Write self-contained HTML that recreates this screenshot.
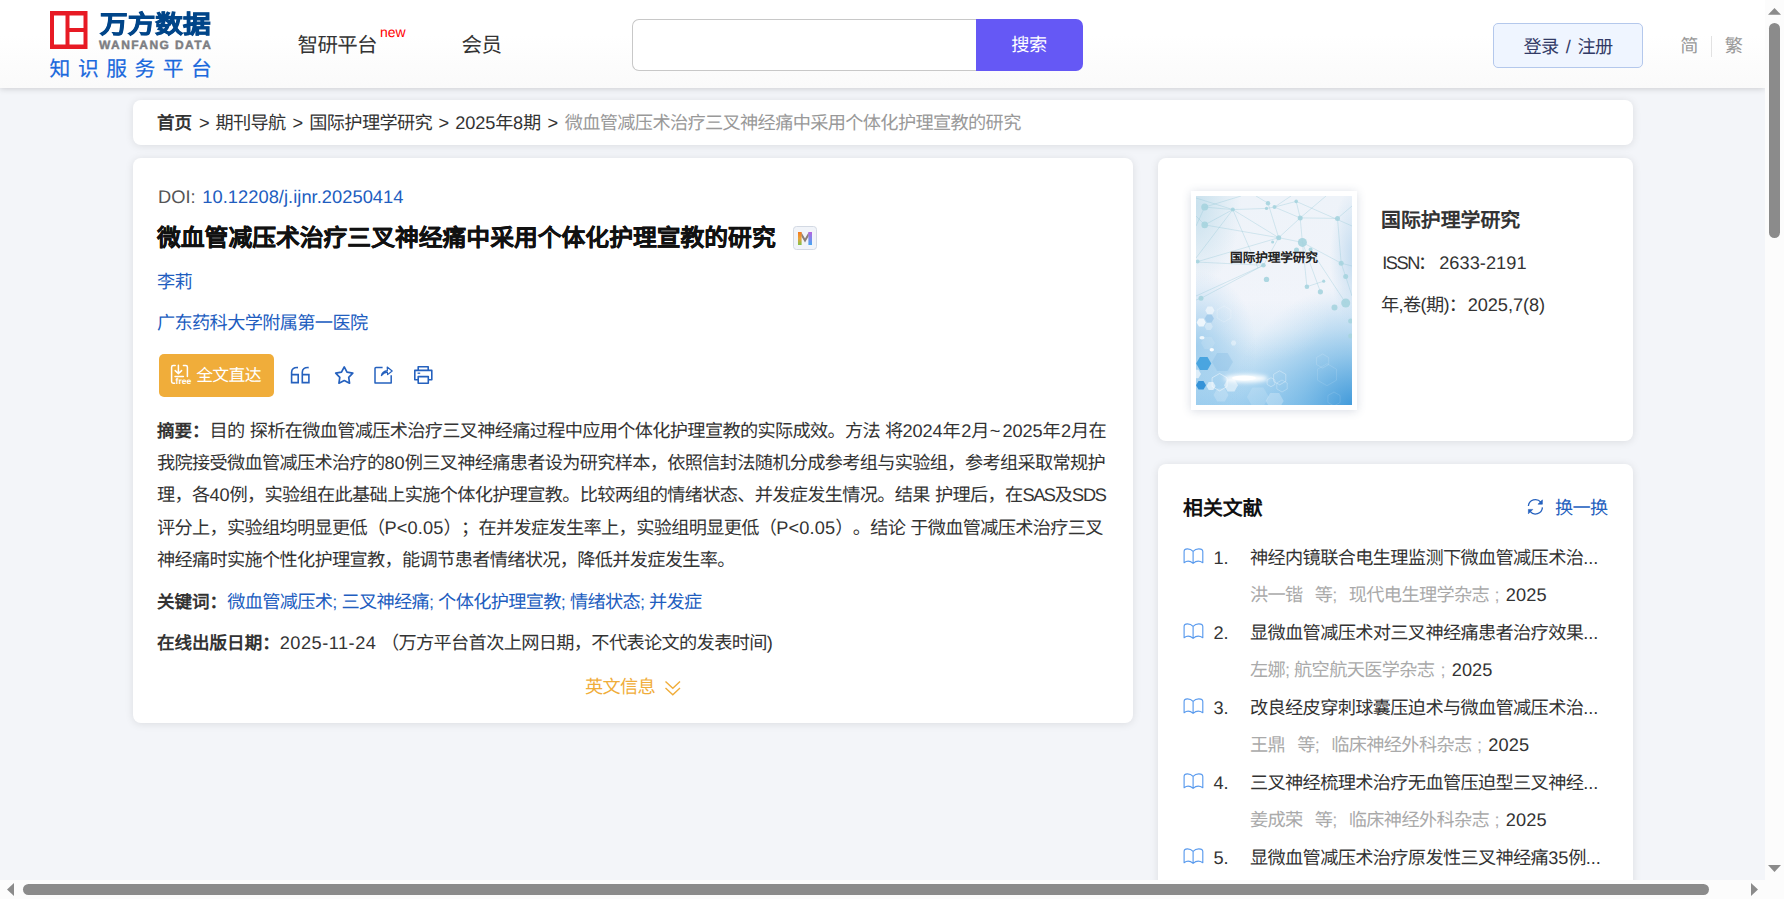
<!DOCTYPE html>
<html lang="zh-CN">
<head>
<meta charset="utf-8">
<title>微血管减压术治疗三叉神经痛中采用个体化护理宣教的研究 - 万方数据知识服务平台</title>
<style>
*{box-sizing:border-box;margin:0;padding:0}
html,body{width:1784px;height:899px;overflow:hidden}
body{text-rendering:geometricPrecision;text-spacing-trim:space-all;font-family:"Liberation Sans",sans-serif;background:#f3f5f9;color:#333;position:relative;font-size:18.2px;letter-spacing:-.65px}
a{text-decoration:none;color:inherit}
.abs{position:absolute;white-space:nowrap}
/* header */
#hdr{position:absolute;left:0;top:0;width:1765px;height:88px;background:linear-gradient(#fff,#fff 40%,#fafafa);box-shadow:0 1px 6px rgba(0,0,0,.16)}
/* cards */
.card{position:absolute;background:#fff;border-radius:8px;box-shadow:0 1px 8px rgba(0,0,0,.1)}
.blue{color:#215dbf}
.d{font-size:18.2px;letter-spacing:-.1px;line-height:1}
.L{font-size:18.2px;line-height:1;letter-spacing:0}
.gt{line-height:26px}
b{font-size:17.55px;letter-spacing:0}
.gray{color:#aaa}
/* scrollbars */
.sb{position:absolute;background:#fcfcfc}
.thumb{position:absolute;background:#8b8b8b;border-radius:6px}
</style>
</head>
<body>

<!-- ===== header ===== -->
<div id="hdr">
  <!-- logo -->
  <svg class="abs" style="left:50px;top:11px" width="38" height="38" viewBox="0 0 38 38">
    <rect x="0" y="0" width="37.5" height="38" fill="#e71a24"/>
    <rect x="4" y="4.5" width="11.5" height="29" fill="#fff"/>
    <rect x="19.5" y="4.5" width="14" height="12.5" fill="#fff"/>
    <rect x="19.5" y="21" width="14" height="12.5" fill="#fff"/>
  </svg>
  <div class="abs" id="lg1" style="left:99.5px;top:7.6px;font-size:25px;font-weight:900;color:#004589;-webkit-text-stroke:.8px #004589;line-height:34px;letter-spacing:0;transform:scaleX(1.105);transform-origin:0 0">万方数据</div>
  <div class="abs" id="lg2" style="left:99px;top:38px;font-size:12px;font-weight:bold;color:#7d7e83;-webkit-text-stroke:.45px #7d7e83;line-height:14px;letter-spacing:1.42px">WANFANG DATA</div>
  <div class="abs" id="lg3" style="left:49.6px;top:57.3px;font-size:20.8px;color:#1a69dd;-webkit-text-stroke:.2px #1a69dd;line-height:26px;letter-spacing:7.5px">知识服务平台</div>

  <div class="abs" id="nav1" style="left:297.6px;top:32.7px;font-size:20.5px;letter-spacing:-.7px;line-height:26px;color:#333">智研平台</div>
  <div class="abs" id="new" style="letter-spacing:0;left:380px;top:23.5px;font-size:14px;line-height:16px;color:#f00">new</div>
  <div class="abs" id="nav2" style="left:461.6px;top:32.7px;font-size:20.5px;letter-spacing:-.7px;line-height:26px;color:#333">会员</div>

  <!-- search -->
  <div class="abs" style="left:632px;top:19px;width:345px;height:52px;border:1px solid #c8c8c8;border-right:0;border-radius:7px 0 0 7px;background:#fff"></div>
  <div class="abs" id="sbtn" style="left:976px;top:19px;width:107px;height:52px;border-radius:0 7px 7px 0;background:#6558f5;color:#fff;font-size:18.2px;line-height:53.6px;text-align:center;text-indent:-1.2px">搜索</div>

  <!-- login -->
  <div class="abs" id="login" style="left:1493px;top:23px;width:150px;height:45px;border:1px solid #b4c8ec;border-radius:5px;background:#eff5ff;color:#323a66;font-size:18.2px;line-height:46px;word-spacing:2.9px;text-align:center">登录 / 注册</div>
  <div class="abs" id="jian" style="left:1680.2px;top:34px;font-size:18.2px;line-height:24px;color:#999">简</div>
  <div class="abs" style="left:1711px;top:36px;width:1px;height:21px;background:#e2e2e2"></div>
  <div class="abs" id="fan" style="left:1724.7px;top:34px;font-size:18.2px;line-height:24px;color:#999">繁</div>
</div>

<!-- ===== breadcrumb ===== -->
<div class="card" style="left:133px;top:100px;width:1500px;height:45px"></div>
<div id="bc" style="position:absolute;left:0;top:109.6px;width:1200px;height:26px;line-height:26px;color:#333;white-space:nowrap">
<b class="abs" style="left:157px">首页</b><span class="abs L gt" style="left:199px">&gt;</span>
<a class="abs" style="left:215.5px">期刊导航</a><span class="abs L gt" style="left:292.4px">&gt;</span>
<a class="abs" style="left:309.3px">国际护理学研究</a><span class="abs L gt" style="left:438.4px">&gt;</span>
<a class="abs" id="bc4" style="left:455.3px"><span class="d">2025</span>年<span class="d">8</span>期</a><span class="abs L gt" style="left:547.6px">&gt;</span>
<span class="abs" id="bc5" style="left:564.7px;color:#999">微血管减压术治疗三叉神经痛中采用个体化护理宣教的研究</span>
</div>

<!-- ===== main card ===== -->
<div class="card" style="left:133px;top:158px;width:1000px;height:565px"></div>
<div class="abs" id="doi" style="letter-spacing:0;left:158px;top:184.2px;line-height:26px;font-size:18.3px;color:#555">DOI: <a class="blue" id="doilink" style="margin-left:1.6px;letter-spacing:.04px">10.12208/j.ijnr.20250414</a></div>
<h1 class="abs" id="ttl" style="letter-spacing:0;left:157px;top:223.3px;-webkit-text-stroke:.3px #111;font-size:23.8px;line-height:32px;font-weight:bold;color:#111">微血管减压术治疗三叉神经痛中采用个体化护理宣教的研究</h1>
<svg class="abs" id="mico" style="left:793px;top:226px" width="24" height="24" viewBox="0 0 24 24">
  <defs>
    <linearGradient id="mg1" x1="0" y1="0" x2="0" y2="1"><stop offset="0" stop-color="#f47a1f"/><stop offset=".5" stop-color="#e9a23a"/><stop offset="1" stop-color="#7fc24a"/></linearGradient>
    <linearGradient id="mg2" x1="0" y1="0" x2="0" y2="1"><stop offset="0" stop-color="#b565e0"/><stop offset=".5" stop-color="#7f86ea"/><stop offset="1" stop-color="#45a6f2"/></linearGradient>
  </defs>
  <rect x=".5" y=".5" width="23" height="23" rx="3" fill="#f1f4f9" stroke="#d3d9e3"/>
  <path d="M8.2 6 L12 12.6 L15.8 6 L15.8 10 L12 16.5 L8.2 10Z" fill="#8a7f78"/>
  <rect x="5" y="6" width="3.6" height="13" fill="url(#mg1)"/>
  <rect x="15.4" y="6" width="3.6" height="13" fill="url(#mg2)"/>
</svg>
<a class="abs blue" id="auth" style="left:157px;top:269px;line-height:26px">李莉</a>
<a class="abs blue" id="aff" style="left:157px;top:310px;line-height:26px">广东药科大学附属第一医院</a>

<div class="abs" id="ftbtn" style="left:159px;top:354px;width:115px;height:43px;border-radius:5px;background:#f0ad3a"></div>
<svg class="abs" id="ftico" style="left:170px;top:364px" width="24" height="22" viewBox="0 0 24 22" fill="none" stroke="#fff" stroke-width="1.5" stroke-linecap="round" stroke-linejoin="round">
  <path d="M5.2 1.6 H3.2 Q1.6 1.6 1.6 3.2 V17.6 Q1.6 19.2 3.2 19.2 H4.6"/>
  <path d="M13.4 1.6 H15.8 Q17.4 1.6 17.4 3.2 V12.6"/>
  <path d="M8.4 1.2 V9.4 M5.2 6.6 L8.4 9.6 L11.6 6.6"/>
  <path d="M5 12.6 H13.4"/>
  <text x="5.6" y="20.4" font-family="Liberation Sans, sans-serif" font-size="8.6" font-weight="bold" letter-spacing="0" fill="#fff" stroke="none">free</text>
</svg>
<svg class="abs" id="icq" style="left:290px;top:366px" width="21" height="19" viewBox="0 0 21 19" fill="none" stroke="#2561be" stroke-width="1.6">
  <path d="M8 1.6 Q1.6 1.2 1.6 6.2 V16.6 H8.2 V8.6 H1.6"/>
  <path d="M18.7 1.6 Q12.3 1.2 12.3 6.2 V16.6 H18.9 V8.6 H12.3"/>
</svg>
<svg class="abs" id="ics" style="left:334px;top:365px" width="21" height="20" viewBox="0 0 21 20" fill="none" stroke="#2561be" stroke-width="1.7" stroke-linejoin="round">
  <path d="M10.25 1.90 L13.01 7.10 L18.81 8.12 L14.72 12.35 L15.54 18.18 L10.25 15.60 L4.96 18.18 L5.78 12.35 L1.69 8.12 L7.49 7.10Z"/>
</svg>
<svg class="abs" id="icsh" style="left:373px;top:365px" width="21" height="20" viewBox="0 0 21 20" fill="none" stroke="#2561be" stroke-width="1.5" stroke-linejoin="round">
  <path d="M9.6 2.6 H3 Q2 2.6 2 3.6 V18 H18.2 V10.2"/>
  <path d="M8.4 10.6 Q9.2 6.2 14.4 5.6 L14.2 2 L19.2 6 L14.6 9.6 L14.4 7.2 Q10.6 7.4 8.4 10.6Z" stroke-width="1.2"/>
</svg>
<svg class="abs" id="icp" style="left:413px;top:365px" width="21" height="20" viewBox="0 0 21 20" fill="none" stroke="#2561be" stroke-width="1.6" stroke-linejoin="round">
  <path d="M5.2 5.4 V1.8 H15.2 V5.4"/>
  <path d="M5.2 14.8 H1.8 V5.4 H18.8 V14.8 H15.4"/>
  <path d="M5.2 11.6 H15.3 V18.2 H5.2Z"/>
  <path d="M4.6 8.2 H7.2" stroke-width="1.3"/>
</svg>
<div class="abs" id="fttxt" style="left:196.2px;top:364px;font-size:16.8px;letter-spacing:-.6px;line-height:24px;color:#fff">全文直达</div>

<div id="abs" style="position:absolute;left:157px;top:414.5px;width:960px;line-height:32.45px;color:#333;white-space:nowrap;word-spacing:.7px;letter-spacing:-.68px">
<div id="l1"><b>摘要：</b>目的 探析在微血管减压术治疗三叉神经痛过程中应用个体化护理宣教的实际成效。方法 将<span class="d">2024</span>年<span class="d" style="margin-left:1.1px">2</span>月<span style="margin:0 2px 0 1px;letter-spacing:0">~</span><span class="d">2025</span>年<span class="d" style="margin-left:1.1px">2</span>月在</div>
<div id="l2">我院接受微血管减压术治疗的<span class="d">80</span>例三叉神经痛患者设为研究样本，依照信封法随机分成参考组与实验组，参考组采取常规护</div>
<div id="l3">理，各<span class="d">40</span>例，实验组在此基础上实施个体化护理宣教。比较两组的情绪状态、并发症发生情况。结果 护理后，在<span style="letter-spacing:-1.45px">SAS</span>及<span style="letter-spacing:-1.25px">SDS</span></div>
<div id="l4">评分上，实验组均明显更低（<span style="letter-spacing:.13px">P&lt;0.05</span>）；在并发症发生率上，实验组明显更低（<span style="letter-spacing:.13px">P&lt;0.05</span>）。结论 于微血管减压术治疗三叉</div>
<div id="l5">神经痛时实施个性化护理宣教，能调节患者情绪状况，降低并发症发生率。</div>
</div>

<div class="abs" id="kw" style="left:157px;top:589.4px;line-height:26px;word-spacing:.2px"><b>关键词：</b><span class="blue"><a>微血管减压术</a>; <a>三叉神经痛</a>; <a>个体化护理宣教</a>; <a>情绪状态</a>; <a>并发症</a></span></div>
<div class="abs" id="dt" style="left:157px;top:630px;line-height:26px"><b>在线出版日期：</b><span class="L" style="letter-spacing:.5px">2025-11-24</span><span style="margin-left:4.5px">（</span>万方平台首次上网日期，不代表论文的发表时间)</div>
<div class="abs" id="en" style="left:585px;top:674px;line-height:26px;color:#f0ad3a">英文信息</div>
<svg class="abs" id="chev" style="left:664px;top:680px" width="18" height="17" viewBox="0 0 18 17" fill="none" stroke="#f0ad3a" stroke-width="1.4"><path d="M1.5 1.5 L8.8 8.3 L16 1.5"/><path d="M1.5 8 L8.8 14.8 L16 8"/></svg>

<!-- ===== journal card ===== -->
<div class="card" style="left:1158px;top:158px;width:475px;height:283px"></div>
<div class="abs" id="cov" style="left:1191px;top:191px;width:166px;height:219px;background:#fff;box-shadow:0 1px 9px rgba(60,80,120,.2)">
<svg id="covimg" style="position:absolute;left:5px;top:5px" width="156" height="209" viewBox="0 0 156 209">
<defs>
<linearGradient id="cg0" x1="0" y1="0" x2="0" y2="1"><stop offset="0" stop-color="#eef3f9"/><stop offset=".5" stop-color="#f1f4fa"/><stop offset=".64" stop-color="#e3eef8"/><stop offset=".8" stop-color="#c6e1f4"/><stop offset="1" stop-color="#9fcfef"/></linearGradient>
<radialGradient id="cg1" cx="160" cy="214" r="125" gradientUnits="userSpaceOnUse"><stop offset="0" stop-color="#3a95d8" stop-opacity="1"/><stop offset=".45" stop-color="#5aaae0" stop-opacity=".5"/><stop offset="1" stop-color="#7fc0ea" stop-opacity="0"/></radialGradient>
<radialGradient id="cg2" cx="0" cy="0" r="1" gradientTransform="translate(0 150) scale(60 75)" gradientUnits="userSpaceOnUse"><stop offset="0" stop-color="#8cc4ea" stop-opacity=".7"/><stop offset="1" stop-color="#8cc4ea" stop-opacity="0"/></radialGradient>
<radialGradient id="cg3" cx="0" cy="0" r="1" gradientTransform="translate(0 10) scale(45 80)" gradientUnits="userSpaceOnUse"><stop offset="0" stop-color="#c4dfec" stop-opacity=".9"/><stop offset="1" stop-color="#c4dfec" stop-opacity="0"/></radialGradient>
<radialGradient id="cg4" cx="0" cy="0" r="1" gradientTransform="translate(158 62) scale(24 70)" gradientUnits="userSpaceOnUse"><stop offset="0" stop-color="#c0daef" stop-opacity=".95"/><stop offset="1" stop-color="#c3dcf0" stop-opacity="0"/></radialGradient>
<radialGradient id="cg5" cx="0" cy="0" r="1" gradientTransform="translate(74 120) scale(60 45)" gradientUnits="userSpaceOnUse"><stop offset="0" stop-color="#f2f5fb" stop-opacity=".35"/><stop offset="1" stop-color="#f2f5fb" stop-opacity="0"/></radialGradient>
<filter id="bl" x="-50%" y="-200%" width="200%" height="500%"><feGaussianBlur stdDeviation="2.2"/></filter>
<filter id="bl2" x="-20%" y="-20%" width="140%" height="140%"><feGaussianBlur stdDeviation=".5"/></filter>
</defs>
<rect width="156" height="209" fill="url(#cg0)"/><rect width="156" height="209" fill="url(#cg2)"/><rect width="156" height="209" fill="url(#cg1)"/><rect width="156" height="209" fill="url(#cg5)"/><rect width="156" height="209" fill="url(#cg3)"/><rect width="156" height="209" fill="url(#cg4)"/>
<g filter="url(#bl2)"><g fill="none" stroke="#8fc6d6" stroke-opacity=".42" stroke-width=".8"><path d="M8.7 11.1 L36.8 13.6 L70.5 12.4 L78.5 11.1 L100.2 5.4 L156 30"/><path d="M0 2 L36.8 13.6 L82.7 41.7 L106.4 46.4 L145.2 67.2 L156 70"/><path d="M0 20 L8.7 28.9 L36.8 13.6 L0 62"/><path d="M8.7 28.9 L82.7 41.7"/><path d="M36.8 13.6 L62 72"/><path d="M72 7.2 L82.7 41.7 L67.4 69.3 L5 102.3 L0 104"/><path d="M60 0 L72 7.2 M95 0 L78.5 11.1 L104.2 21.9 L141.5 22.4 L156 10"/><path d="M100.2 5.4 L104.2 21.9 L106.4 46.4 L110.9 90.7 L127.7 85.2"/><path d="M104.2 21.9 L82.7 41.7 L1.6 65.6"/><path d="M130 0 L104.2 21.9"/><path d="M141.5 22.4 L145.2 67.2 L149.7 80.5 L156 100"/><path d="M106.4 46.4 L124.4 95.8"/><path d="M0 66 L67.4 69.3 L0 100"/><path d="M114.6 53.6 L149.7 107"/><path d="M8.7 11.1 L0 30 M8.7 11.1 L45 0"/></g>
<g fill="#a6d4df" fill-opacity=".9"><circle cx="8.7" cy="11.1" r="3.5"/><circle cx="8.7" cy="28.9" r="3.3"/><circle cx="36.8" cy="13.6" r="2"/><circle cx="72" cy="7.2" r="2.2"/><circle cx="70.5" cy="12.4" r="1.6"/><circle cx="78.5" cy="11.1" r="2"/><circle cx="100.2" cy="5.4" r="1.8"/><circle cx="104.2" cy="21.9" r="2.5"/><circle cx="141.5" cy="22.4" r="2.5"/><circle cx="82.7" cy="41.7" r="2.5"/><circle cx="76.6" cy="46" r="1.5"/><circle cx="106.4" cy="46.4" r="4.5"/><circle cx="100.5" cy="54" r="2.5"/><circle cx="114.6" cy="53.6" r="2"/><circle cx="67.4" cy="69.3" r="2.3"/><circle cx="70.5" cy="83.4" r="2.7"/><circle cx="110.9" cy="90.7" r="2.3"/><circle cx="127.7" cy="85.2" r="1.6"/><circle cx="124.4" cy="95.8" r="2.6"/><circle cx="145.2" cy="67.2" r="2.5"/><circle cx="149.7" cy="80.5" r="2.5"/><circle cx="1.6" cy="65.6" r="2"/><circle cx="5" cy="102.3" r="2.5"/><circle cx="138.5" cy="111.5" r="3"/><circle cx="149.7" cy="107" r="4.5"/><circle cx="154.6" cy="125" r="2.5"/><circle cx="154.6" cy="140" r="2.5"/></g></g>
<polygon points="18.5,114.6 16.2,118.6 11.6,118.6 9.3,114.6 11.6,110.6 16.2,110.6" fill="#fff" fill-opacity="0.55"/>
<polygon points="17.9,122.4 15.6,126.4 11.0,126.4 8.7,122.4 11.0,118.4 15.6,118.4" fill="#9cc7e8" fill-opacity="0.8"/>
<polygon points="9.8,126.4 7.5,130.4 2.9,130.4 0.6,126.4 2.9,122.4 7.5,122.4" fill="#fff" fill-opacity="0.75"/>
<polygon points="16.9,130.5 14.8,134.1 10.6,134.1 8.5,130.5 10.6,126.9 14.8,126.9" fill="#fff" fill-opacity="0.3"/>
<polygon points="40.4,147.0 39.0,149.4 36.2,149.4 34.8,147.0 36.2,144.6 39.0,144.6" fill="#fff" fill-opacity="0.4"/>
<polygon points="15.3,167.5 11.5,174.1 3.9,174.1 0.1,167.5 3.9,160.9 11.5,160.9" fill="#3fa0de" fill-opacity="0.9"/>
<polygon points="36.9,166.0 31.6,175.1 21.2,175.1 15.9,166.0 21.1,156.9 31.6,156.9" fill="#7db6e2" fill-opacity="0.3"/>
<polygon points="10.0,189.3 7.5,193.6 2.5,193.6 0.0,189.3 2.5,185.0 7.5,185.0" fill="#2f8fd6" fill-opacity="0.95"/>
<polygon points="19.6,190.0 17.3,194.0 12.7,194.0 10.4,190.0 12.7,186.0 17.3,186.0" fill="#fff" fill-opacity="0.6"/>
<polygon points="42.0,189.3 38.5,195.4 31.5,195.4 28.0,189.3 31.5,183.2 38.5,183.2" fill="#fff" fill-opacity="0.5"/>
<polygon points="72.9,201.0 67.4,210.5 56.4,210.5 50.9,201.0 56.4,191.5 67.4,191.5" fill="#fff" fill-opacity="0.14"/>
<polygon points="87.7,204.9 83.2,212.7 74.2,212.7 69.7,204.9 74.2,197.1 83.2,197.1" fill="#fff" fill-opacity="0.25"/>
<polygon points="32.5,199.0 28.8,205.5 21.2,205.5 17.5,199.0 21.2,192.5 28.8,192.5" fill="#fff" fill-opacity="0.2"/>
<polygon points="19.0,147.0 15.5,153.1 8.5,153.1 5.0,147.0 8.5,140.9 15.5,140.9" fill="#fff" fill-opacity="0.12"/>
<polygon points="5.0,178.0 2.5,182.3 -2.5,182.3 -5.0,178.0 -2.5,173.7 2.5,173.7" fill="#fff" fill-opacity="0.6"/>
<polygon points="31.1,190.5 23.6,194.9 16.1,190.5 16.1,181.8 23.6,177.5 31.1,181.8" fill="none" stroke="#fff" stroke-opacity="0.6" stroke-width=".8"/>
<polygon points="89.8,185.3 83.7,188.8 77.6,185.3 77.6,178.3 83.7,174.8 89.8,178.3" fill="none" stroke="#fff" stroke-opacity="0.4" stroke-width=".8"/>
<polygon points="78.9,188.4 75.0,190.7 71.1,188.4 71.1,183.9 75.0,181.7 78.9,183.9" fill="none" stroke="#fff" stroke-opacity="0.4" stroke-width=".8"/>
<polygon points="91.2,193.0 86.0,196.0 80.8,193.0 80.8,187.0 86.0,184.0 91.2,187.0" fill="none" stroke="#fff" stroke-opacity="0.3" stroke-width=".8"/>
<polygon points="132.7,168.5 126.6,172.0 120.5,168.5 120.5,161.5 126.6,158.0 132.7,161.5" fill="none" stroke="#fff" stroke-opacity="0.18" stroke-width=".8"/>
<polygon points="140.5,184.2 131.0,189.7 121.5,184.2 121.5,173.2 131.0,167.7 140.5,173.2" fill="none" stroke="#fff" stroke-opacity="0.15" stroke-width=".8"/>
<polygon points="144.1,206.5 138.0,210.0 131.9,206.5 131.9,199.5 138.0,196.0 144.1,199.5" fill="none" stroke="#fff" stroke-opacity="0.15" stroke-width=".8"/>
<polygon points="34.9,122.0 28.0,126.0 21.1,122.0 21.1,114.0 28.0,110.0 34.9,114.0" fill="none" stroke="#fff" stroke-opacity="0.25" stroke-width=".8"/>
<ellipse cx="6" cy="141.7" rx="2.6" ry="1.8" fill="#fff" fill-opacity=".8"/><ellipse cx="15.8" cy="153.8" rx="2.2" ry="1.8" fill="#fff" fill-opacity=".95"/>
<ellipse cx="50" cy="182.5" rx="22" ry="4" fill="#fff" filter="url(#bl)"/><ellipse cx="48" cy="182" rx="12" ry="2.6" fill="#fff" filter="url(#bl2)"/>
</svg>
<div id="covt" style="position:absolute;left:5px;top:58px;width:156px;text-align:center;font-size:12.7px;font-weight:bold;letter-spacing:-.15px;line-height:18px;color:#222">国际护理学研究</div>
</div>
<div class="abs" id="jt" style="letter-spacing:0;left:1381px;top:206.5px;font-size:19.9px;font-weight:bold;line-height:28px;color:#333">国际护理学研究</div>
<div class="abs" id="issn" style="left:1381px;top:250px;line-height:26px;color:#333"><span style="letter-spacing:-1.4px;margin-left:1.2px">ISSN</span><span style="margin-left:-1px">：</span><span class="L" style="letter-spacing:.05px;margin-left:3.6px">2633-2191</span></div>
<div class="abs" id="yv" style="left:1381px;top:292px;line-height:26px;color:#333">年,卷(期)：<span class="L" style="margin-left:1.3px;letter-spacing:-.05px">2025,7(8)</span></div>

<!-- ===== related card ===== -->
<div class="card" style="left:1158px;top:464px;width:475px;height:440px"></div>
<div class="abs" id="rt" style="letter-spacing:0;left:1183px;top:494.5px;font-size:19.9px;font-weight:bold;line-height:28px;color:#111">相关文献</div>
<svg class="abs" id="rfi" style="left:1526px;top:498px" width="19" height="18" viewBox="0 0 19 18" fill="none" stroke="#2561be" stroke-width="1.3"><path d="M2.4 8 A7 7 0 0 1 14.8 4.2"/><path d="M16.4 9.4 A7 7 0 0 1 4 13.4"/><path d="M16.4 1.8 V6.2 H12Z" fill="#2561be" stroke-width=".6"/><path d="M2.4 15.8 V11.4 H6.8Z" fill="#2561be" stroke-width=".6"/></svg>
<a class="abs" id="hyh" style="left:1555px;top:494.5px;line-height:26px;color:#2561be">换一换</a>
<svg class="abs" style="left:1183px;top:548px" width="21" height="17" viewBox="0 0 21 17" fill="none" stroke="#5a9bee" stroke-width="1.15" stroke-linejoin="round"><path d="M10.1 3.4 Q7.8 .8 4.4 .8 Q1.1 .8 1.1 3.6 V14.7 Q5.6 11.4 10.1 15.4 Q14.6 11.4 19.8 14.7 V3.6 Q19.8 .8 15.8 .8 Q12.4 .8 10.1 3.4 V15.2"/></svg>
<div class="abs L" id="n1" style="left:1213.4px;top:545px;line-height:26px;color:#333">1.</div>
<a class="abs" id="t1" style="left:1250px;top:545px;line-height:26px;color:#333">神经内镜联合电生理监测下微血管减压术治<span class="L">...</span></a>
<div class="abs gray" id="s1" style="left:1250px;top:582px;line-height:26px">洪一锴<span style="margin-left:12.1px">等;</span><span style="margin-left:12.1px">现代电生理学杂志</span><span style="margin-left:5.5px">;</span><span class="L" style="color:#333;margin-left:6.8px;letter-spacing:.1px">2025</span></div>
<svg class="abs" style="left:1183px;top:623px" width="21" height="17" viewBox="0 0 21 17" fill="none" stroke="#5a9bee" stroke-width="1.15" stroke-linejoin="round"><path d="M10.1 3.4 Q7.8 .8 4.4 .8 Q1.1 .8 1.1 3.6 V14.7 Q5.6 11.4 10.1 15.4 Q14.6 11.4 19.8 14.7 V3.6 Q19.8 .8 15.8 .8 Q12.4 .8 10.1 3.4 V15.2"/></svg>
<div class="abs L" id="n2" style="left:1213.4px;top:620px;line-height:26px;color:#333">2.</div>
<a class="abs" id="t2" style="left:1250px;top:620px;line-height:26px;color:#333">显微血管减压术对三叉神经痛患者治疗效果<span class="L">...</span></a>
<div class="abs gray" id="s2" style="left:1250px;top:657px;line-height:26px">左娜;<span style="margin-left:4.6px">航空航天医学杂志</span><span style="margin-left:6.1px">;</span><span class="L" style="color:#333;margin-left:6.8px;letter-spacing:.1px">2025</span></div>
<svg class="abs" style="left:1183px;top:698px" width="21" height="17" viewBox="0 0 21 17" fill="none" stroke="#5a9bee" stroke-width="1.15" stroke-linejoin="round"><path d="M10.1 3.4 Q7.8 .8 4.4 .8 Q1.1 .8 1.1 3.6 V14.7 Q5.6 11.4 10.1 15.4 Q14.6 11.4 19.8 14.7 V3.6 Q19.8 .8 15.8 .8 Q12.4 .8 10.1 3.4 V15.2"/></svg>
<div class="abs L" id="n3" style="left:1213.4px;top:695px;line-height:26px;color:#333">3.</div>
<a class="abs" id="t3" style="left:1250px;top:695px;line-height:26px;color:#333">改良经皮穿刺球囊压迫术与微血管减压术治<span class="L">...</span></a>
<div class="abs gray" id="s3" style="left:1250px;top:732px;line-height:26px">王鼎<span style="margin-left:12.1px">等;</span><span style="margin-left:12.1px">临床神经外科杂志</span><span style="margin-left:5.5px">;</span><span class="L" style="color:#333;margin-left:6.8px;letter-spacing:.1px">2025</span></div>
<svg class="abs" style="left:1183px;top:773px" width="21" height="17" viewBox="0 0 21 17" fill="none" stroke="#5a9bee" stroke-width="1.15" stroke-linejoin="round"><path d="M10.1 3.4 Q7.8 .8 4.4 .8 Q1.1 .8 1.1 3.6 V14.7 Q5.6 11.4 10.1 15.4 Q14.6 11.4 19.8 14.7 V3.6 Q19.8 .8 15.8 .8 Q12.4 .8 10.1 3.4 V15.2"/></svg>
<div class="abs L" id="n4" style="left:1213.4px;top:770px;line-height:26px;color:#333">4.</div>
<a class="abs" id="t4" style="left:1250px;top:770px;line-height:26px;color:#333">三叉神经梳理术治疗无血管压迫型三叉神经<span class="L">...</span></a>
<div class="abs gray" id="s4" style="left:1250px;top:807px;line-height:26px">姜成荣<span style="margin-left:12.1px">等;</span><span style="margin-left:12.1px">临床神经外科杂志</span><span style="margin-left:5.5px">;</span><span class="L" style="color:#333;margin-left:6.8px;letter-spacing:.1px">2025</span></div>
<svg class="abs" style="left:1183px;top:848px" width="21" height="17" viewBox="0 0 21 17" fill="none" stroke="#5a9bee" stroke-width="1.15" stroke-linejoin="round"><path d="M10.1 3.4 Q7.8 .8 4.4 .8 Q1.1 .8 1.1 3.6 V14.7 Q5.6 11.4 10.1 15.4 Q14.6 11.4 19.8 14.7 V3.6 Q19.8 .8 15.8 .8 Q12.4 .8 10.1 3.4 V15.2"/></svg>
<div class="abs L" id="n5" style="left:1213.4px;top:845px;line-height:26px;color:#333">5.</div>
<a class="abs" id="t5" style="left:1250px;top:845px;line-height:26px;color:#333">显微血管减压术治疗原发性三叉神经痛<span class="d">35</span>例<span class="L">...</span></a>

<!-- ===== fake scrollbars ===== -->
<div class="sb" style="left:1765px;top:0;width:19px;height:899px">
  <svg class="abs" style="left:0;top:0" width="19" height="899">
    <path d="M3 14.7 L9.5 8 L16 14.7Z" fill="#8b8b8b"/>
    <path d="M3 865 L16 865 L9.5 872Z" fill="#8b8b8b"/>
  </svg>
  <div class="thumb" style="left:4px;top:23px;width:11px;height:215px"></div>
</div>
<div class="sb" style="left:0;top:880px;width:1784px;height:19px">
  <svg class="abs" style="left:0;top:0" width="1784" height="19">
    <path d="M14 3 L14 16 L7 9.5Z" fill="#8b8b8b"/>
    <path d="M1751 3 L1751 16 L1758 9.5Z" fill="#8b8b8b"/>
  </svg>
  <div class="thumb" style="left:23px;top:4px;width:1686px;height:11px"></div>
</div>
</body>
</html>
